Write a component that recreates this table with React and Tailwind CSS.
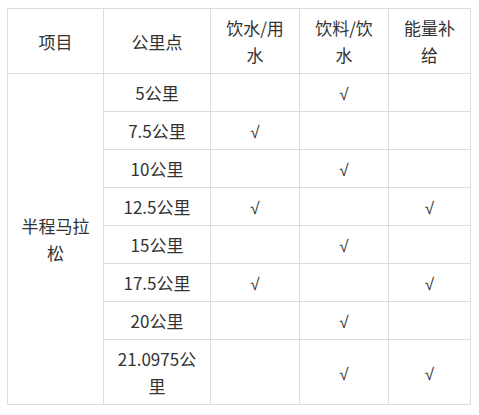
const rows = [
  { km: "5公里", water: false, drink: true, energy: false },
  { km: "7.5公里", water: true, drink: false, energy: false },
  { km: "10公里", water: false, drink: true, energy: false },
  { km: "12.5公里", water: true, drink: false, energy: true },
  { km: "15公里", water: false, drink: true, energy: false },
  { km: "17.5公里", water: true, drink: false, energy: true },
  { km: "20公里", water: false, drink: true, energy: false },
  { km: "21.0975公里", water: false, drink: true, energy: true },
];

const cell = "border border-[#dddddd] px-[10px] py-[5px] text-center align-middle";

function Check({ on }) {
  if (!on) return null;
  return <span className="leading-none [font-family:'Liberation_Sans',sans-serif]">√</span>;
}

export default function App() {
  return (
    <div className="min-h-[415px] bg-white pl-[7px] pt-[8px] text-[17px] leading-[27px] text-[#333333] [font-family:'Noto_Sans_CJK_SC',sans-serif]">
      <table className="table-fixed border-collapse" style={{ width: 463 }}>
        <colgroup>
          <col className="w-[96px]" />
          <col className="w-[107px]" />
          <col className="w-[89px]" />
          <col className="w-[89px]" />
          <col className="w-[82px]" />
        </colgroup>
        <thead>
          <tr>
            <th className={`${cell} font-normal`}>项目</th>
            <th className={`${cell} font-normal`}>公里点</th>
            <th className={`${cell} font-normal`}>饮水/用水</th>
            <th className={`${cell} font-normal`}>饮料/饮水</th>
            <th className={`${cell} font-normal`}>能量补给</th>
          </tr>
        </thead>
        <tbody>
          {rows.map((r, i) => (
            <tr key={r.km}>
              {i === 0 && (
                <td rowSpan={rows.length} className={cell}>
                  半程马拉松
                </td>
              )}
              <td className={cell}>{r.km}</td>
              <td className={cell}><Check on={r.water} /></td>
              <td className={cell}><Check on={r.drink} /></td>
              <td className={cell}><Check on={r.energy} /></td>
            </tr>
          ))}
        </tbody>
      </table>
    </div>
  );
}
